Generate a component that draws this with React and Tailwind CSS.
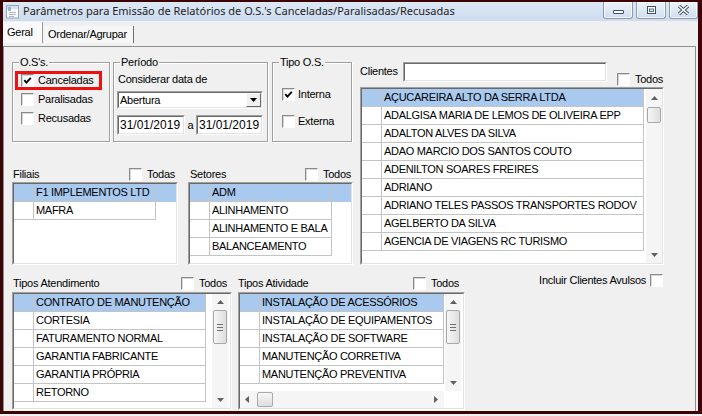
import React from "react";

const CLIENTES = [
  "AÇUCAREIRA ALTO DA SERRA LTDA",
  "ADALGISA MARIA DE LEMOS DE OLIVEIRA EPP",
  "ADALTON ALVES DA SILVA",
  "ADAO MARCIO DOS SANTOS COUTO",
  "ADENILTON SOARES FREIRES",
  "ADRIANO",
  "ADRIANO TELES PASSOS TRANSPORTES RODOV",
  "AGELBERTO DA SILVA",
  "AGENCIA DE VIAGENS RC TURISMO",
];
const FILIAIS = ["F1 IMPLEMENTOS LTD", "MAFRA"];
const SETORES = ["ADM", "ALINHAMENTO", "ALINHAMENTO E BALA", "BALANCEAMENTO"];
const ATENDIMENTOS = [
  "CONTRATO DE MANUTENÇÃO",
  "CORTESIA",
  "FATURAMENTO NORMAL",
  "GARANTIA FABRICANTE",
  "GARANTIA PRÓPRIA",
  "RETORNO",
];
const ATIVIDADES = [
  "INSTALAÇÃO DE ACESSÓRIOS",
  "INSTALAÇÃO DE EQUIPAMENTOS",
  "INSTALAÇÃO DE SOFTWARE",
  "MANUTENÇÃO CORRETIVA",
  "MANUTENÇÃO PREVENTIVA",
];

export default function App() {
  return (
    <div className="h-[416px] w-[702px] overflow-hidden bg-[#f0f0f0] font-['Liberation_Sans',Arial,sans-serif] text-[11px] tracking-[-0.25px] text-black">
      <div className="flex h-[414px] flex-col border-t-2 border-r-[4px] border-b-[3px] border-l-[3px] border-[#3c0404]">
        <TitleBar />

        {/* tabs */}
        <div className="flex h-[25px] items-start">
          <div className="mt-[1px] h-[21px] w-[40px] border-r border-[#9a9a9a] bg-[#fafafa] pl-[4px] leading-[21px]">Geral</div>
          <div className="mt-[5px] ml-[1px] h-[17px] w-[90px] border-r border-[#6e6e6e] bg-[#f6f6f6] pl-[4px] leading-[16px]">Ordenar/Agrupar</div>
        </div>

        <div className="mr-[2px] min-h-0 flex-1 overflow-hidden border-t border-r border-l border-[#8e8e8e] pl-[8px]">
          <div className="flex">
            {/* left column */}
            <div className="mt-[9px] w-[341px]">
              <div className="flex">
                <Group title="O.S's." className="w-[98px]">
                  <div className="mt-[2px] ml-[2px] flex h-[19px] w-[87px] items-center border-[3px] border-[#ee1111] pl-[3px]">
                    <Check checked />
                    <span className="ml-[4px]">Canceladas</span>
                  </div>
                  <CheckRow label="Paralisadas" className="pl-[8px]" />
                  <CheckRow label="Recusadas" className="pl-[8px]" />
                </Group>

                <Group title="Período" className="ml-[3px] w-[155px]">
                  <div className="h-[20px] pl-[4px] leading-[20px]">Considerar data de</div>
                  <Sunken className="mt-[2px] ml-[3px] h-[18px] w-[146px]" inner="flex items-center">
                    <span className="flex-1 pl-[1px]">Abertura</span>
                    <div className="flex h-[14px] w-[15px] items-center justify-center border border-t-white border-l-white border-r-[#696969] border-b-[#696969] bg-[#f0f0f0]">
                      <svg width="7" height="4" viewBox="0 0 7 4"><path d="M0 0H7L3.5 4Z" fill="#000" /></svg>
                    </div>
                  </Sunken>
                  <div className="mt-[6px] ml-[3px] flex h-[20px] items-center">
                    <Sunken className="h-[20px] w-[68px]" inner="pl-[1px] text-[12px] leading-[16px] tracking-normal">31/01/2019</Sunken>
                    <span className="w-[11px] text-center">a</span>
                    <Sunken className="h-[20px] w-[67px]" inner="pl-[1px] text-[12px] leading-[16px] tracking-normal">31/01/2019</Sunken>
                  </div>
                </Group>

                <Group title="Tipo O.S." className="ml-[4px] w-[80px]">
                  <div className="pt-[16px]">
                    <CheckRow label="Interna" checked className="pl-[9px]" gap="ml-[3px]" />
                    <CheckRow label="Externa" className="mt-[8px] pl-[9px]" gap="ml-[3px]" />
                  </div>
                </Group>
              </div>

              <div className="mt-[24px] flex">
                <div className="w-[166px]">
                  <LabelRow label="Filiais" todos="Todas" className="h-[16px] pr-[3px] pl-[1px]" />
                  <Sunken className="h-[83px]">
                    <GridRows items={FILIAIS} cell="w-[122px]" />
                  </Sunken>
                </div>
                <div className="ml-[10px] w-[165px]">
                  <LabelRow label="Setores" todos="Todos" className="h-[16px] pr-[2px] pl-[2px]" />
                  <Sunken className="h-[83px]">
                    <GridRows items={SETORES} cell="w-[122px]" />
                  </Sunken>
                </div>
              </div>
            </div>

            {/* right column */}
            <div className="mt-[15px] ml-[7px] w-[304px]">
              <div className="flex h-[20px]">
                <span className="w-[43px] leading-[18px]">Clientes</span>
                <Sunken className="h-[20px] w-[204px]" />
                <div className="mt-[11px] ml-[10px] flex h-[13px] items-center">
                  <Check />
                  <span className="ml-[5px]">Todos</span>
                </div>
              </div>
              <Sunken className="mt-[5px] h-[178px]" inner="flex">
                <GridRows items={CLIENTES} cell="w-[262px]" />
                <VScroll className="ml-[2px] w-[16px]" upH="h-[18px]" thumb="h-[16px]" />
              </Sunken>
            </div>
          </div>

          {/* bottom */}
          <div className="mt-[8px] flex">
            <div className="w-[220px] pt-[1px]">
              <LabelRow label="Tipos Atendimento" todos="Todos" className="h-[18px] pr-[5px] pl-[1px]" />
              <Sunken className="h-[118px]" inner="flex">
                <GridRows items={ATENDIMENTOS} cell="w-[172px]" />
                <VScroll className="ml-[6px] w-[16px]" upH="h-[16px]" thumb="h-[34px]" grip />
              </Sunken>
            </div>
            <div className="ml-[6px] w-[227px] pt-[1px]">
              <LabelRow label="Tipos Atividade" todos="Todos" className="h-[18px] pr-[6px]" />
              <Sunken className="h-[118px]" inner="flex flex-col">
                <div className="flex min-h-0 flex-1">
                  <GridRows items={ATIVIDADES} cell="w-[184px]" />
                  <VScroll className="ml-[1px] w-[16px]" upH="h-[16px]" thumb="h-[34px]" grip />
                </div>
                <div className="flex h-[17px] w-[204px] items-center bg-[#f5f5f5]">
                  <div className="flex w-[14px] justify-center"><Arrow dir="left" /></div>
                  <div className="ml-[3px] h-[15px] w-[16px] rounded-[2px] border border-[#a8a8a8] bg-gradient-to-b from-[#f6f6f6] to-[#dedede]" />
                  <div className="flex-1" />
                  <div className="flex w-[16px] justify-center"><Arrow dir="right" /></div>
                </div>
              </Sunken>
            </div>
            <div className="mr-[32px] ml-auto flex h-[14px] items-center">
              <span className="mr-[4px]">Incluir Clientes Avulsos</span>
              <Check />
            </div>
          </div>
        </div>
      </div>
    </div>
  );
}

function TitleBar() {
  return (
    <div className="flex h-[19px] shrink-0 items-start bg-gradient-to-b from-[#dde8f5] to-[#cddcef]">
      <svg className="mt-[2px] ml-[2px]" width="15" height="15" viewBox="0 0 15 15">
        <rect x="1.5" y="1.5" width="12" height="12.5" fill="#fbfbfb" stroke="#9aa6b6" />
        <rect x="2" y="2" width="11" height="3" fill="#d3e0f0" />
        <rect x="3" y="3" width="3" height="4" fill="#93b3dc" />
        <path d="M4 8.5h7M4 10.5h7M4 12.5h5" stroke="#aab5c4" />
      </svg>
      <span className="ml-[3px] font-['Noto_Sans',sans-serif] text-[11px] leading-[18px] tracking-normal text-[#1e1e1e]">
        Parâmetros para Emissão de Relatórios de O.S.'s Canceladas/Paralisadas/Recusadas
      </span>
      <div className="ml-auto flex gap-[3px]">
        <WinBtn>
          <svg width="11" height="10" viewBox="0 0 11 10"><rect x="0.5" y="5.5" width="10" height="3" rx="0.5" fill="#fff" stroke="#3e4f68" /></svg>
        </WinBtn>
        <WinBtn>
          <svg width="11" height="10" viewBox="0 0 11 10"><rect x="1.5" y="1.5" width="8" height="7" fill="#fff" stroke="#3e4f68" /><rect x="3.5" y="4" width="4" height="2.5" fill="#d8e2ef" stroke="#3e4f68" strokeWidth="0.8" /></svg>
        </WinBtn>
        <WinBtn w="w-[29px]">
          <svg width="13" height="10" viewBox="0 0 13 10"><path d="M2 1L11 9M11 1L2 9" stroke="#3e4f68" strokeWidth="3.4" /><path d="M2 1L11 9M11 1L2 9" stroke="#fff" strokeWidth="1.6" /></svg>
        </WinBtn>
      </div>
    </div>
  );
}

function WinBtn({ children, w = "w-[30px]" }) {
  return (
    <div className={`flex h-[17px] ${w} items-center justify-center rounded-b-[3px] border border-t-0 border-[#8d9cb3] bg-gradient-to-b from-[#eef3fa] to-[#d2deee] shadow-[inset_0_0_0_1px_rgba(255,255,255,0.7)]`}>
      {children}
    </div>
  );
}

function Group({ title, className = "", children }) {
  return (
    <fieldset className={`h-[86px] border border-[#a0a0a0] shadow-[inset_1px_1px_0_#fff,1px_1px_0_#fff] ${className}`}>
      <legend className="ml-[6px] bg-[#f0f0f0] px-[1px] leading-[13px]">{title}</legend>
      {children}
    </fieldset>
  );
}

function Check({ checked = false }) {
  return (
    <span className="flex h-[13px] w-[13px] shrink-0 items-center justify-center border border-t-[#8a8a8a] border-r-white border-b-white border-l-[#8a8a8a] bg-white shadow-[inset_1px_1px_0_#d8d8d8]">
      {checked && (
        <svg width="9" height="9" viewBox="0 0 9 9">
          <path d="M1.3 4.2L3.4 6.6L7.8 1.8" fill="none" stroke="#000" strokeWidth="1.9" />
        </svg>
      )}
    </span>
  );
}

function CheckRow({ label, checked, className = "", gap = "ml-[4px]" }) {
  return (
    <div className={`flex h-[19px] items-center ${className}`}>
      <Check checked={checked} />
      <span className={gap}>{label}</span>
    </div>
  );
}

function LabelRow({ label, todos, className = "" }) {
  return (
    <div className={`flex items-center justify-between ${className}`}>
      <span>{label}</span>
      <div className="flex items-center">
        <Check />
        <span className="ml-[5px]">{todos}</span>
      </div>
    </div>
  );
}

function Sunken({ className = "", inner = "", children }) {
  return (
    <div className={`border border-t-[#a0a0a0] border-r-white border-b-white border-l-[#a0a0a0] ${className}`}>
      <div className={`h-full overflow-hidden border border-t-[#696969] border-r-[#e3e3e3] border-b-[#e3e3e3] border-l-[#696969] bg-white ${inner}`}>
        {children}
      </div>
    </div>
  );
}

function GridRows({ items, cell }) {
  return (
    <div className="shrink-0">
      {items.map((t, i) => (
        <div key={t} className={`flex h-[18px] ${i === 0 ? "bg-[#a9c9ef]" : ""}`}>
          <div className="w-[20px] shrink-0 border-r border-b border-[#c4c4c4]" />
          <div className={`${cell} shrink-0 overflow-hidden border-r border-b border-[#c4c4c4] pl-[2px] leading-[17px] tracking-[-0.3px] whitespace-nowrap`}>
            {t}
          </div>
        </div>
      ))}
    </div>
  );
}

function Arrow({ dir }) {
  if (dir === "up") return <svg width="7" height="4" viewBox="0 0 7 4"><path d="M0 4L3.5 0L7 4Z" fill="#606060" /></svg>;
  if (dir === "down") return <svg width="7" height="4" viewBox="0 0 7 4"><path d="M0 0H7L3.5 4Z" fill="#606060" /></svg>;
  if (dir === "left") return <svg width="4" height="7" viewBox="0 0 4 7"><path d="M4 0V7L0 3.5Z" fill="#606060" /></svg>;
  return <svg width="4" height="7" viewBox="0 0 4 7"><path d="M0 0L4 3.5L0 7Z" fill="#606060" /></svg>;
}

function VScroll({ className = "", upH, thumb, grip }) {
  return (
    <div className={`flex shrink-0 flex-col items-center bg-[#f5f5f5] ${className}`}>
      <div className={`flex ${upH} items-center justify-center`}><Arrow dir="up" /></div>
      <div className={`flex ${thumb} w-[14px] flex-col items-center justify-center gap-[2px] rounded-[2px] border border-[#a8a8a8] bg-gradient-to-r from-[#f6f6f6] to-[#dedede]`}>
        {grip && (
          <>
            <div className="h-px w-[6px] bg-[#707070]" />
            <div className="h-px w-[6px] bg-[#707070]" />
            <div className="h-px w-[6px] bg-[#707070]" />
          </>
        )}
      </div>
      <div className="flex-1" />
      <div className="flex h-[16px] items-center justify-center"><Arrow dir="down" /></div>
    </div>
  );
}
